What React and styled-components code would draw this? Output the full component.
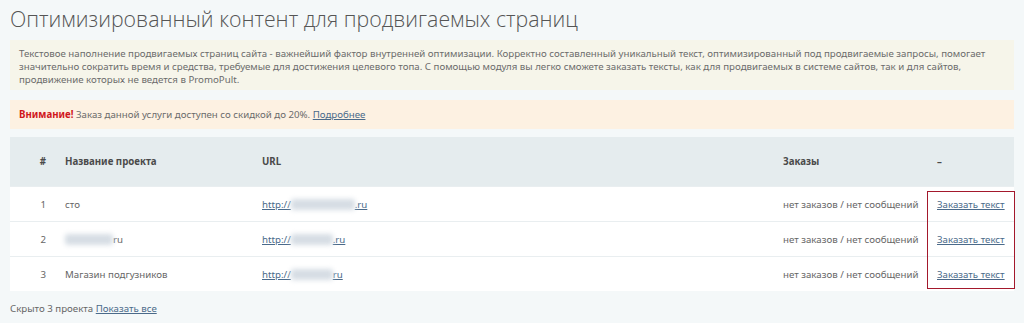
import styled, { createGlobalStyle } from 'styled-components'

const Global = createGlobalStyle`
  body {
    margin: 0;
    background: #f4f8f9;
    font-family: "Noto Sans", Tahoma, sans-serif;
  }
`

const Page = styled.div`
  padding: 5px 10px 10px 10px;
  color: #666;
  font-size: 9.7px;
`

const Title = styled.h1`
  margin: 0 0 8px 0;
  font-family: "Open Sans", sans-serif;
  font-weight: 300;
  font-size: 21.3px;
  line-height: 27px;
  color: #555;
`

const Note = styled.div`
  background: ${p => p.$tone === 'warn' ? '#fdf1e2' : '#f6f5ea'};
  padding: ${p => p.$tone === 'warn' ? '8px 9px' : '7px 9px 4px'};
  line-height: 13px;
  margin-bottom: ${p => p.$tone === 'warn' ? '8px' : '10px'};
  color: #6b6b6b;
`

const Strong = styled.b`
  color: #d0161c;
`

const Link = styled.a`
  color: #4a6a8a;
  text-decoration: underline;
  cursor: pointer;
`

const TableWrap = styled.div`
  position: relative;
  background: #fff;
`

const Row = styled.div`
  display: grid;
  grid-template-columns: 45px 197px 521px 154px 1fr;
  align-items: center;
  height: ${p => p.$head ? '49px' : '34px'};
  background: ${p => p.$head ? '#e5ecee' : '#fff'};
  border-top: ${p => p.$head ? 'none' : '1px solid #e9eef0'};
  font-weight: ${p => p.$head ? 'bold' : 'normal'};
  color: ${p => p.$head ? '#4a4a4a' : '#666'};
`

const Cell = styled.div`
  padding-left: 10px;
  white-space: nowrap;
`

const NumCell = styled.div`
  text-align: right;
  padding-right: 9px;
`

const Blur = styled.span`
  display: inline-block;
  width: ${p => p.$w}px;
  height: 11px;
  vertical-align: middle;
  background: #d6dde4;
  filter: blur(2.5px);
  border-radius: 3px;
`

const Marker = styled.div`
  position: absolute;
  left: 917px;
  top: 54px;
  width: 86px;
  height: 96px;
  border: 1.5px solid #a3182c;
  pointer-events: none;
`

const Footer = styled.div`
  margin-top: 11px;
  color: #666;
`

const rows = [
  { n: 1, name: 'сто', url: 64 },
  { n: 2, name: null, url: 42 },
  { n: 3, name: 'Магазин подгузников', url: 42 },
]

export default function App() {
  return (
    <Page>
      <Global />
      <Title>Оптимизированный контент для продвигаемых страниц</Title>
      <Note>
        Текстовое наполнение продвигаемых страниц сайта - важнейший фактор внутренней оптимизации. Корректно составленный уникальный текст, оптимизированный под продвигаемые запросы, помогает значительно сократить время и средства, требуемые для достижения целевого топа. С помощью модуля вы легко сможете заказать тексты, как для продвигаемых в системе сайтов, так и для сайтов, продвижение которых не ведется в PromoPult.
      </Note>
      <Note $tone="warn">
        <Strong>Внимание!</Strong> Заказ данной услуги доступен со скидкой до 20%. <Link>Подробнее</Link>
      </Note>
      <TableWrap>
        <Row $head>
          <NumCell>#</NumCell>
          <Cell>Название проекта</Cell>
          <Cell>URL</Cell>
          <Cell>Заказы</Cell>
          <Cell>–</Cell>
        </Row>
        {rows.map(r => (
          <Row key={r.n}>
            <NumCell>{r.n}</NumCell>
            <Cell>{r.name ? r.name : <><Blur $w={48} />ru</>}</Cell>
            <Cell><Link>http://<Blur $w={r.url} />{r.n === 3 ? 'ru' : '.ru'}</Link></Cell>
            <Cell>нет заказов / нет сообщений</Cell>
            <Cell><Link>Заказать текст</Link></Cell>
          </Row>
        ))}
        <Marker />
      </TableWrap>
      <Footer>
        Скрыто 3 проекта <Link>Показать все</Link>
      </Footer>
    </Page>
  )
}
